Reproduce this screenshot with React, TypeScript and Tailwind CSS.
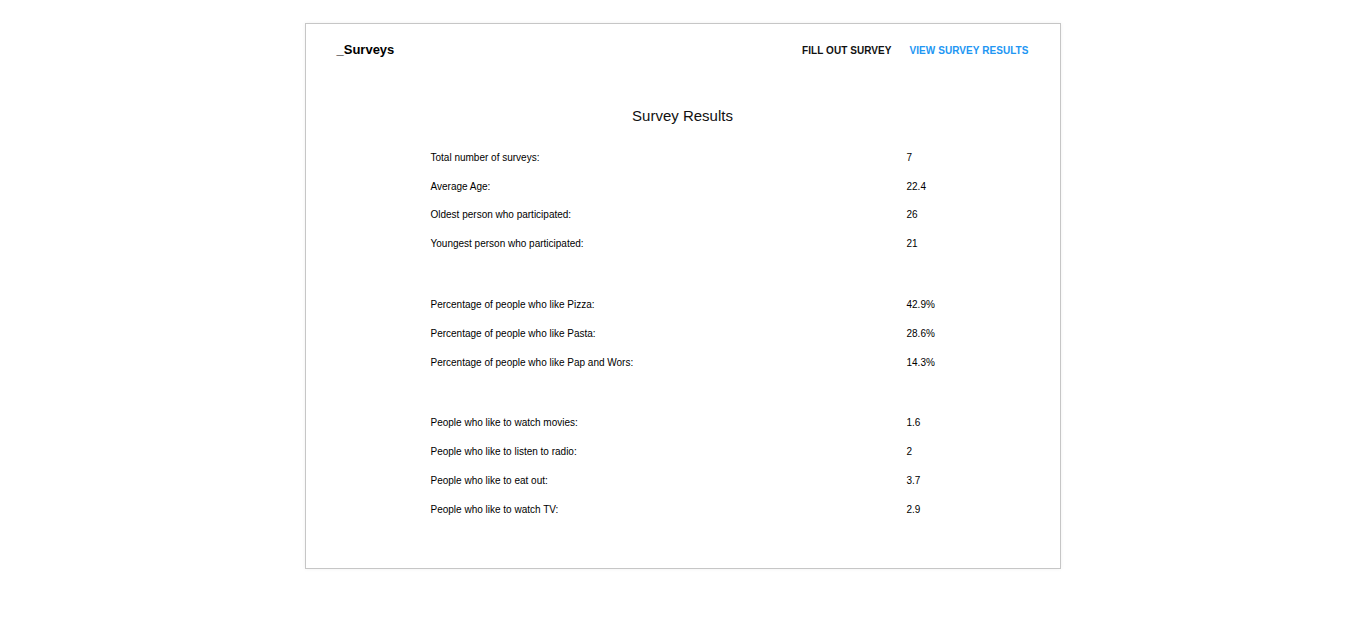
const groups = [
  [
    { label: "Total number of surveys:", value: "7" },
    { label: "Average Age:", value: "22.4" },
    { label: "Oldest person who participated:", value: "26" },
    { label: "Youngest person who participated:", value: "21" },
  ],
  [
    { label: "Percentage of people who like Pizza:", value: "42.9%" },
    { label: "Percentage of people who like Pasta:", value: "28.6%" },
    { label: "Percentage of people who like Pap and Wors:", value: "14.3%" },
  ],
  [
    { label: "People who like to watch movies:", value: "1.6" },
    { label: "People who like to listen to radio:", value: "2" },
    { label: "People who like to eat out:", value: "3.7" },
    { label: "People who like to watch TV:", value: "2.9" },
  ],
];

export default function App() {
  return (
    <div className="min-h-screen bg-white pt-[23px] font-['Liberation_Sans',Arial,sans-serif] text-black">
      <div className="mx-auto h-[546px] w-[756px] border border-[#c6c6c6] bg-white pt-[18px] shadow-[0_0_4px_rgba(0,0,0,0.06)]">
        {/* header */}
        <div className="flex h-[16px] items-center justify-between px-[31px]">
          <span className="text-[13px] font-bold">_Surveys</span>
          <nav className="flex items-center gap-[18px] text-[10px] font-bold uppercase tracking-[0.06px]">
            <a className="text-[#111]">Fill out survey</a>
            <a className="text-[#2196f3]">View survey results</a>
          </nav>
        </div>

        <h1 className="mt-[49px] text-center text-[15px] leading-[18px] text-[#111]">Survey Results</h1>

        <div className="mt-[18px] flex flex-col gap-[32px] pl-[125px]">
          {groups.map((rows, i) => (
            <div key={i} className="flex flex-col">
              {rows.map((r) => (
                <div key={r.label} className="grid h-[28.8px] grid-cols-[476px_1fr] items-center text-[10px]">
                  <span>{r.label}</span>
                  <span>{r.value}</span>
                </div>
              ))}
            </div>
          ))}
        </div>
      </div>
    </div>
  );
}
